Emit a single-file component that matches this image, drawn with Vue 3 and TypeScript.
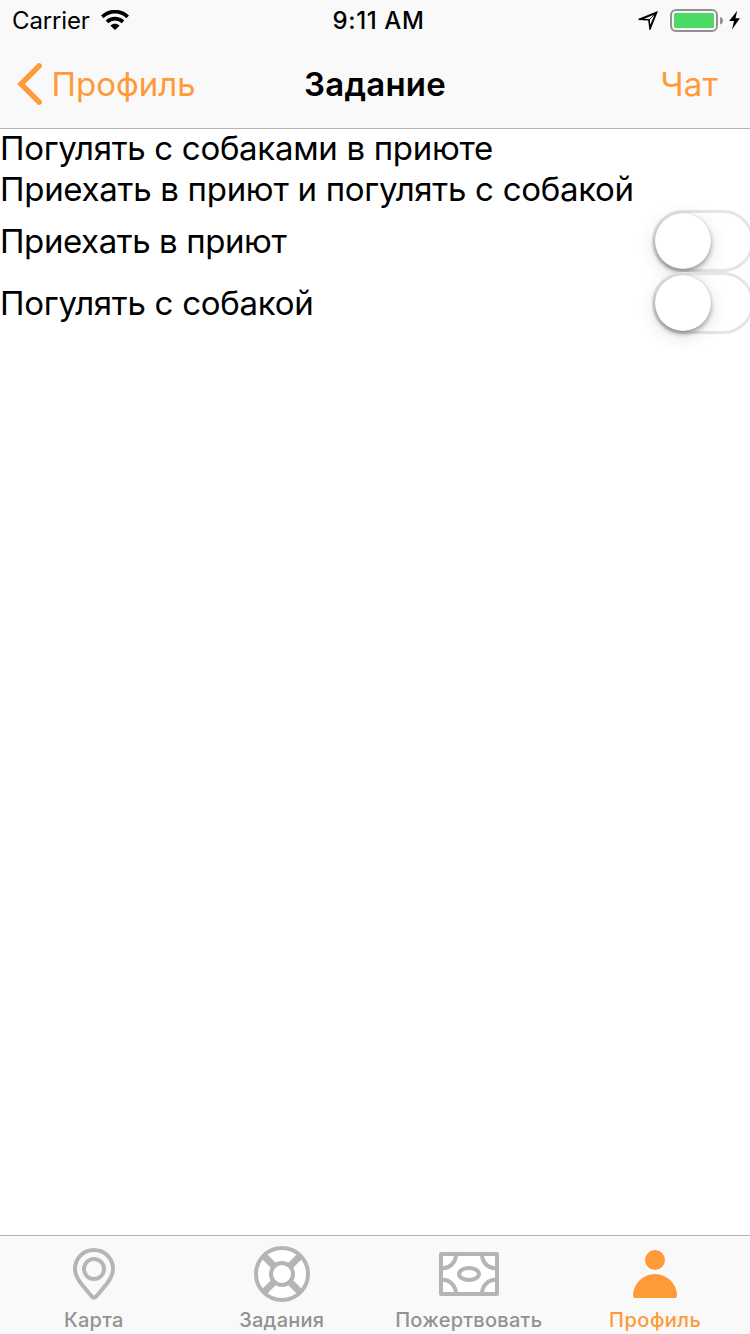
<script setup lang="ts">
import { ref } from 'vue'

interface Step { title: string; done: boolean; kind: string }
interface Tab { id: string; label: string }

const steps = ref<Step[]>([
  { title: 'Приехать в приют', done: false, kind: 'arrive' },
  { title: 'Погулять с собакой', done: false, kind: 'walk' },
])
const tabs: Tab[] = [
  { id: 'map', label: 'Карта' },
  { id: 'tasks', label: 'Задания' },
  { id: 'donate', label: 'Пожертвовать' },
  { id: 'profile', label: 'Профиль' },
]
const active = ref('profile')
</script>

<template>
  <div class="screen">
    <header class="top">
      <div class="status">
        <div class="side">
          <span class="carrier">Carrier</span>
          <svg class="wifi" width="28" height="20" viewBox="0 0 28 20">
            <g fill="none" stroke="#000" stroke-width="3.7">
              <path d="M1.3 6.8C8.5-.1 19.5-.1 26.7 6.8" />
              <path d="M6 11.8C10.5 7.6 17.5 7.6 22 11.8" />
            </g>
            <path d="M9.5 15.7C12 13.2 16 13.2 18.5 15.7L14 20Z" />
          </svg>
        </div>
        <span class="clock">9:11 AM</span>
        <div class="side right">
          <svg class="location" width="20" height="20" viewBox="0 0 20 20">
            <path fill-rule="evenodd" d="M20 1L.5 8.8V10L10.2 10.6L11.4 20H12.4ZM16.6 4.6L12.3 14.8L11.8 9.2L6.2 8.8Z" />
            <path d="M11 10L17.5 3.5" stroke="#000" stroke-width=".8" />
          </svg>
          <svg class="battery" width="54" height="24" viewBox="0 0 54 24">
            <rect x="1" y="1" width="46" height="21" rx="5" fill="none" stroke="#929292" stroke-width="2" />
            <rect x="4" y="4" width="40" height="15" rx="1.5" fill="#4cd964" />
            <path d="M50 8Q53 8.5 53 11.5T50 15.5Z" fill="#929292" />
          </svg>
          <svg class="bolt" width="12" height="20" viewBox="0 0 12 20">
            <path d="M8.2.8L.1 11H5L3 19.5L11 8.2H6.5Z" />
          </svg>
        </div>
      </div>
      <nav class="nav">
        <a class="back">
          <svg width="26" height="44" viewBox="0 0 26 44">
            <path d="M23.2 3.8L5 22L23.2 40.2" fill="none" stroke="#ff9a38" stroke-width="5.4" stroke-linecap="round" />
          </svg>
          <span class="back-label">Профиль</span>
        </a>
        <span class="title">Задание</span>
        <a class="chat">Чат</a>
      </nav>
    </header>

    <main class="content">
      <p class="line name">Погулять с собаками в приюте</p>
      <p class="line about">Приехать в приют и погулять с собакой</p>
      <div v-for="step in steps" :key="step.kind" class="step">
        <span :class="step.kind">{{ step.title }}</span>
        <button class="switch" :class="{ on: step.done }" :aria-label="step.title" @click="step.done = !step.done">
          <span class="knob"></span>
        </button>
      </div>
    </main>

    <footer class="tabs">
      <a v-for="tab in tabs" :key="tab.id" class="tab" :class="[tab.id, { active: active === tab.id }]" @click="active = tab.id">
        <svg v-if="tab.id === 'map'" width="60" height="60" viewBox="0 0 60 60" fill="none" stroke="#b5b5b5" stroke-width="4">
          <path d="M30 4C19 4 11 12.5 11 23C11 29 14 33.5 17 37.5L28 50.7Q30 52.7 32 50.7L43 37.5C46 33.5 49 29 49 23C49 12.5 41 4 30 4Z" />
          <circle cx="30" cy="23" r="10" />
        </svg>
        <svg v-else-if="tab.id === 'tasks'" width="60" height="60" viewBox="0 0 60 60" stroke="#b5b5b5">
          <circle cx="30" cy="28" r="26" fill="#fff" stroke-width="4" />
          <path d="M12 10L48 46M48 10L12 46" stroke-width="7" />
          <circle cx="30" cy="28" r="11" fill="#fff" stroke-width="4" />
        </svg>
        <svg v-else-if="tab.id === 'donate'" width="62" height="60" viewBox="0 0 62 60" stroke="#b5b5b5" stroke-width="4" fill="none">
          <rect x="3" y="8" width="56" height="40" fill="#fff" stroke-linejoin="round" />
          <ellipse cx="31" cy="28" rx="10" ry="6" />
          <path d="M3 22A13 14 0 0 0 18 8M44 8A13 14 0 0 0 59 22M59 34A13 14 0 0 0 44 48M18 48A13 14 0 0 0 3 34" />
        </svg>
        <svg v-else width="60" height="60" viewBox="0 0 60 60" fill="#ff9a38">
          <circle cx="30" cy="14" r="10" />
          <path d="M8 50A22 22 0 0 1 52 50Q52 52 50 52H10Q8 52 8 50Z" />
        </svg>
        <span class="label">{{ tab.label }}</span>
      </a>
    </footer>
  </div>
</template>

<style>
body { margin: 0; }
</style>

<style scoped>
.screen {
  display: flex;
  flex-direction: column;
  width: 750px;
  height: 1334px;
  overflow: hidden;
  background: #fff;
  color: #000;
  font-family: Inter, "Liberation Sans", sans-serif;
  font-kerning: normal;
  white-space: nowrap;
}
.top {
  box-sizing: border-box;
  height: 129px;
  background: #f9f9f9;
  border-bottom: 1px solid #b2b2b2;
}
.status, .nav {
  display: grid;
  grid-template-columns: 1fr auto 1fr;
  align-items: center;
}
.status { grid-template-rows: 40px; height: 40px; font-size: 24px; line-height: 40px; }
.side { display: flex; align-items: center; height: 40px; padding-left: 12px; }
.right { justify-content: flex-end; padding: 0 9px 0 0; }
.carrier { padding-top: 2px; letter-spacing: -0.15px; }
.wifi { margin-left: 11px; }
.clock { padding: 2px 0 0 7px; font-weight: 500; letter-spacing: 0.6px; }
.location { margin-right: 12px; }
.battery { margin: 2px 5px 0 0; }
.nav { grid-template-rows: 88px; height: 88px; font-size: 33px; line-height: 88px; }
.back { display: flex; align-items: center; padding-left: 16px; color: #ff9a38; }
.back-label { margin-left: 9.5px; }
.title { font-weight: 600; letter-spacing: 0.2px; }
.chat { justify-self: end; padding-right: 32px; letter-spacing: 0.2px; color: #ff9a38; }
.content { flex: 1; font-size: 33px; }
.line { margin: 0; height: 41px; line-height: 38px; }
.line + .line { height: 40px; }
.name { letter-spacing: -0.31px; }
.about { letter-spacing: -0.29px; }
.arrive { letter-spacing: -0.42px; }
.walk { letter-spacing: -0.28px; }
.step { display: flex; align-items: center; justify-content: space-between; height: 62px; }
.switch {
  box-sizing: border-box;
  flex: none;
  width: 102px;
  height: 62px;
  margin-right: -4px;
  padding: 0;
  border: 3px solid #e5e5e5;
  border-radius: 31px;
  background: transparent;
  text-align: left;
}
.switch.on { background: #4cd964; border-color: #4cd964; }
.knob {
  display: block;
  width: 56px;
  height: 56px;
  border-radius: 50%;
  background: #fff;
  box-shadow: 0 0 1px rgba(0, 0, 0, 0.25), 0 3px 5px rgba(0, 0, 0, 0.32), 0 5px 20px rgba(0, 0, 0, 0.12);
}
.switch.on .knob { margin-left: auto; }
.tabs {
  box-sizing: border-box;
  display: grid;
  grid-template-columns: repeat(4, 1fr);
  height: 99px;
  padding-top: 10px;
  border-top: 1px solid #b2b2b2;
  background: #f9f9f9;
}
.tab { display: flex; flex-direction: column; align-items: center; color: #929292; }
.tab.active { color: #ff9a38; }
.tab.tasks { padding-left: 1px; }
.tab.profile { padding-right: 2px; }
.label { margin-top: 2px; font-size: 20px; font-weight: 500; line-height: 24px; letter-spacing: 0.25px; }
.profile .label { letter-spacing: 0.5px; }
</style>
